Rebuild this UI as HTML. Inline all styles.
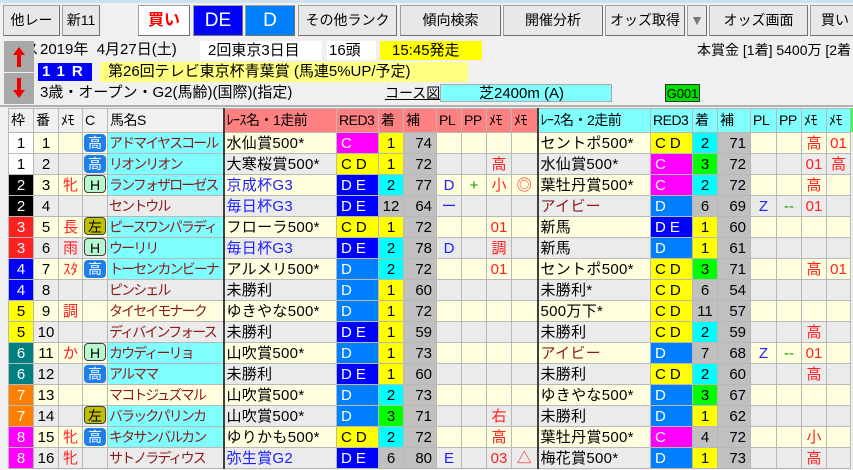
<!DOCTYPE html>
<html><head><meta charset="utf-8"><style>
*{margin:0;padding:0;box-sizing:border-box}
body{width:853px;height:470px;overflow:hidden;background:#f0f0f0;font-family:"Liberation Sans","Noto Sans CJK JP",sans-serif;position:relative;color:#000}
.a{position:absolute;white-space:nowrap}
.btn{position:absolute;top:5px;height:31px;background:#e8e8e8;border:1px solid #a0a0a0;border-right-color:#707070;border-bottom-color:#707070;font-size:14px;text-align:center;line-height:29px}
table{position:absolute;left:8px;top:108px;width:842px;border-collapse:collapse;table-layout:fixed;font-size:15px}
td,th{border:1px solid #b8b8b8;height:21px;padding:0;white-space:nowrap;overflow:hidden;line-height:19px;font-weight:normal}
th{height:24px;background:#f0f0f0;text-align:left;padding-left:2px;font-size:14px;letter-spacing:-0.5px}
th.s{background:#ff8080}th.c{background:#80ffff}
tr.o td{background:#ffffe0}tr.e td{background:#ebebeb}
td.n{text-align:center}
td.w{text-align:center;color:#fff}
td.nm{color:#8b1a1a;padding-left:1px;font-size:14px;letter-spacing:-1.9px}
tr td.cy{background:#80ffff}
td.r{border-left:2px solid #404040;padding-left:2px;letter-spacing:.3px}
th.r{border-left:2px solid #404040}
td.red{padding-left:4px;letter-spacing:4px}
tr td.C{background:#ff00ff;color:#fff}tr td.CD{background:#ffff00}tr td.DE{background:#0000ff;color:#fff}tr td.D{background:#0080ff;color:#fff}
tr td.y{background:#ffff00;text-align:center}tr td.q{background:#00ffff;text-align:center}tr td.g{background:#00ff00;text-align:center}tr td.gr{background:#c0c0c0;text-align:center}
tr td.h{background:#c0c0c0;text-align:right;padding-right:4px}
.m{color:#ff2020;text-align:center}.b{color:#2020ff}.gn{color:#00a000}
.bd{display:inline-block;width:22px;height:18px;border-radius:4px;text-align:center;line-height:18px;font-size:14px;margin-left:1px}
.k{background:#1e7fe8;color:#fff}.H{background:#b8f8d0;border:1px solid #404040}.L{background:#c0c000;border:1px solid #404040}
</style></head><body>
<div class="a" style="left:0;top:0;width:853px;height:3px;background:#cfe0f0"></div>
<div class="btn" style="left:3px;width:57px">他レース</div>
<div class="btn" style="left:62px;width:38px">新11</div>
<div class="btn" style="left:138px;width:52px;background:#fff;color:#f00;font-weight:bold;font-size:16px">買い</div>
<div class="btn" style="left:193px;width:50px;background:#0000ff;color:#fff;font-size:19px">DE</div>
<div class="btn" style="left:245px;width:50px;background:#0080ff;color:#fff;font-size:19px">D</div>
<div class="btn" style="left:298px;width:99px">その他ランク</div>
<div class="btn" style="left:400px;width:101px">傾向検索</div>
<div class="btn" style="left:503px;width:100px">開催分析</div>
<div class="btn" style="left:605px;width:80px">オッズ取得</div>
<div class="btn" style="left:687px;width:20px;color:#777">▼</div>
<div class="btn" style="left:709px;width:99px">オッズ画面</div>
<div class="btn" style="left:810px;width:50px">買い</div>
<svg class="a" style="left:4px;top:41px" width="30" height="63"><rect width="30" height="31" fill="#a8a8a8"/><rect y="32" width="30" height="31" fill="#a8a8a8"/><path d="M15 6 L21 14 L17 14 L17 26 L13 26 L13 14 L9 14 Z" fill="#e00"/><path d="M15 57 L21 49 L17 49 L17 37 L13 37 L13 49 L9 49 Z" fill="#e00"/></svg>
<div class="a" style="left:40px;top:40px;font-size:15px;line-height:20px">2019年&nbsp; 4月27日(土)</div>
<div class="a" style="left:200px;top:41px;width:122px;height:19px;background:#fff;font-size:15px;line-height:19px;padding-left:8px">2回東京3日目</div>
<div class="a" style="left:327px;top:41px;width:49px;height:19px;background:#fff;font-size:15px;line-height:19px;padding-left:2px">16頭</div>
<div class="a" style="left:380px;top:41px;width:102px;height:19px;background:#ffff00;font-size:15px;line-height:19px;padding-left:12px">15:45発走</div>
<div class="a" style="left:697px;top:40px;font-size:14px;line-height:20px">本賞金 [1着] 5400万 [2着</div>
<div class="a" style="left:38px;top:63px;width:54px;height:18px;background:#0000ff;color:#fff;font-size:15px;line-height:18px;font-weight:bold;letter-spacing:7px;padding-left:4px">11R</div>
<div class="a" style="left:100px;top:62px;width:368px;height:20px;background:#ffff80;font-size:15px;line-height:20px;padding-left:8px">第26回テレビ東京杯青葉賞 (馬連5%UP/予定)</div>
<div class="a" style="left:40px;top:83px;font-size:15px;line-height:20px">3歳・オープン・G2(馬齢)(国際)(指定)</div>
<div class="a" style="left:385px;top:83px;font-size:14px;line-height:20px;text-decoration:underline">コース図</div>
<div class="a" style="left:440px;top:84px;width:172px;height:18px;background:#80ffff;font-size:15px;line-height:18px;padding-left:38px;border:1px solid #aaa">芝2400m (A)</div>
<div class="a" style="left:665px;top:84px;width:35px;height:18px;background:#00e000;font-size:13px;line-height:18px;text-align:center;border:1px solid #333">G001</div>
<div class="a" style="left:0;top:105px;width:853px;height:2px;background:#b0b0b0"></div>
<div class="a" style="left:850px;top:108px;width:3px;height:24px;background:#40ff40"></div>
<table>
<colgroup><col style="width:25px"><col style="width:25px"><col style="width:24px"><col style="width:25px"><col style="width:116px"><col style="width:113px"><col style="width:42px"><col style="width:25px"><col style="width:33px"><col style="width:25px"><col style="width:25px"><col style="width:25px"><col style="width:26px"><col style="width:113px"><col style="width:42px"><col style="width:25px"><col style="width:33px"><col style="width:26px"><col style="width:25px"><col style="width:25px"><col style="width:24px"></colgroup>
<tr><th>枠</th><th>番</th><th>ﾒﾓ</th><th>C</th><th>馬名S</th><th class="s r">ﾚｰｽ名・1走前</th><th class="s">RED3</th><th class="s">着</th><th class="s">補</th><th class="s">PL</th><th class="s">PP</th><th class="s">ﾒﾓ</th><th class="s">ﾒﾓ</th><th class="c r">ﾚｰｽ名・2走前</th><th class="c">RED3</th><th class="c">着</th><th class="c">補</th><th class="c">PL</th><th class="c">PP</th><th class="c">ﾒﾓ</th><th class="c">ﾒﾓ</th></tr>
<tr class="o"><td class="w" style="background:#fff;color:#000">1</td><td class="n">1</td><td></td><td><span class="bd k">高</span></td><td class="nm cy">アドマイヤスコール</td><td class="r">水仙賞500*</td><td class="red C">C</td><td class="y">1</td><td class="h">74</td><td></td><td></td><td></td><td></td><td class="r">セントポ500*</td><td class="red CD">CD</td><td class="q">2</td><td class="h">71</td><td></td><td></td><td class="m">高</td><td class="m">01</td></tr>
<tr class="e"><td class="w" style="background:#fff;color:#000">1</td><td class="n">2</td><td></td><td><span class="bd k">高</span></td><td class="nm cy">リオンリオン</td><td class="r">大寒桜賞500*</td><td class="red CD">CD</td><td class="y">1</td><td class="h">72</td><td></td><td></td><td class="m">高</td><td></td><td class="r">水仙賞500*</td><td class="red C">C</td><td class="g">3</td><td class="h">72</td><td></td><td></td><td class="m">01</td><td class="m">高</td></tr>
<tr class="o"><td class="w" style="background:#000">2</td><td class="n">3</td><td class="m">牝</td><td><span class="bd H">H</span></td><td class="nm cy">ランフォザローゼス</td><td class="r b">京成杯G3</td><td class="red DE">DE</td><td class="q">2</td><td class="h">77</td><td class="n b">D</td><td class="n gn">+</td><td class="m">小</td><td class="m">◎</td><td class="r">葉牡丹賞500*</td><td class="red C">C</td><td class="q">2</td><td class="h">72</td><td></td><td></td><td class="m">高</td><td></td></tr>
<tr class="e"><td class="w" style="background:#000">2</td><td class="n">4</td><td></td><td></td><td class="nm">セントウル</td><td class="r b">毎日杯G3</td><td class="red DE">DE</td><td class="gr">12</td><td class="h">64</td><td class="n b">ー</td><td></td><td></td><td></td><td class="r" style="color:#8b1a1a">アイビー</td><td class="red D">D</td><td class="gr">6</td><td class="h">69</td><td class="n b">Z</td><td class="n gn">--</td><td class="m">01</td><td></td></tr>
<tr class="o"><td class="w" style="background:#ff2020">3</td><td class="n">5</td><td class="m">長</td><td><span class="bd L">左</span></td><td class="nm cy">ピースワンパラディ</td><td class="r">フローラ500*</td><td class="red CD">CD</td><td class="y">1</td><td class="h">72</td><td></td><td></td><td class="m">01</td><td></td><td class="r">新馬</td><td class="red DE">DE</td><td class="y">1</td><td class="h">60</td><td></td><td></td><td></td><td></td></tr>
<tr class="e"><td class="w" style="background:#ff2020">3</td><td class="n">6</td><td class="m">雨</td><td><span class="bd H">H</span></td><td class="nm cy">ウーリリ</td><td class="r b">毎日杯G3</td><td class="red DE">DE</td><td class="q">2</td><td class="h">78</td><td class="n b">D</td><td></td><td class="m">調</td><td></td><td class="r">新馬</td><td class="red D">D</td><td class="y">1</td><td class="h">61</td><td></td><td></td><td></td><td></td></tr>
<tr class="o"><td class="w" style="background:#0000ff">4</td><td class="n">7</td><td class="m">ｽﾀ</td><td><span class="bd k">高</span></td><td class="nm cy">トーセンカンビーナ</td><td class="r">アルメリ500*</td><td class="red D">D</td><td class="q">2</td><td class="h">72</td><td></td><td></td><td class="m">01</td><td></td><td class="r">セントポ500*</td><td class="red CD">CD</td><td class="g">3</td><td class="h">71</td><td></td><td></td><td class="m">高</td><td class="m">01</td></tr>
<tr class="e"><td class="w" style="background:#0000ff">4</td><td class="n">8</td><td></td><td></td><td class="nm">ピンシェル</td><td class="r">未勝利</td><td class="red D">D</td><td class="y">1</td><td class="h">60</td><td></td><td></td><td></td><td></td><td class="r">未勝利*</td><td class="red CD">CD</td><td class="gr">6</td><td class="h">54</td><td></td><td></td><td></td><td></td></tr>
<tr class="o"><td class="w" style="background:#ffff00;color:#000">5</td><td class="n">9</td><td class="m">調</td><td></td><td class="nm">タイセイモナーク</td><td class="r">ゆきやな500*</td><td class="red D">D</td><td class="y">1</td><td class="h">72</td><td></td><td></td><td></td><td></td><td class="r">500万下*</td><td class="red CD">CD</td><td class="gr">11</td><td class="h">57</td><td></td><td></td><td></td><td></td></tr>
<tr class="e"><td class="w" style="background:#ffff00;color:#000">5</td><td class="n">10</td><td></td><td></td><td class="nm">ディバインフォース</td><td class="r">未勝利</td><td class="red DE">DE</td><td class="y">1</td><td class="h">59</td><td></td><td></td><td></td><td></td><td class="r">未勝利</td><td class="red CD">CD</td><td class="q">2</td><td class="h">59</td><td></td><td></td><td class="m">高</td><td></td></tr>
<tr class="o"><td class="w" style="background:#008080">6</td><td class="n">11</td><td class="m">か</td><td><span class="bd H">H</span></td><td class="nm cy">カウディーリョ</td><td class="r">山吹賞500*</td><td class="red D">D</td><td class="y">1</td><td class="h">73</td><td></td><td></td><td></td><td></td><td class="r" style="color:#8b1a1a">アイビー</td><td class="red D">D</td><td class="gr">7</td><td class="h">68</td><td class="n b">Z</td><td class="n gn">--</td><td class="m">01</td><td></td></tr>
<tr class="e"><td class="w" style="background:#008080">6</td><td class="n">12</td><td></td><td><span class="bd k">高</span></td><td class="nm cy">アルママ</td><td class="r">未勝利</td><td class="red DE">DE</td><td class="y">1</td><td class="h">60</td><td></td><td></td><td></td><td></td><td class="r">未勝利</td><td class="red CD">CD</td><td class="q">2</td><td class="h">60</td><td></td><td></td><td class="m">高</td><td></td></tr>
<tr class="o"><td class="w" style="background:#ff8000">7</td><td class="n">13</td><td></td><td></td><td class="nm">マコトジュズマル</td><td class="r">山吹賞500*</td><td class="red D">D</td><td class="q">2</td><td class="h">73</td><td></td><td></td><td></td><td></td><td class="r">ゆきやな500*</td><td class="red D">D</td><td class="g">3</td><td class="h">67</td><td></td><td></td><td></td><td></td></tr>
<tr class="e"><td class="w" style="background:#ff8000">7</td><td class="n">14</td><td></td><td><span class="bd L">左</span></td><td class="nm cy">バラックパリンカ</td><td class="r">山吹賞500*</td><td class="red D">D</td><td class="g">3</td><td class="h">71</td><td></td><td></td><td class="m">右</td><td></td><td class="r">未勝利</td><td class="red D">D</td><td class="y">1</td><td class="h">62</td><td></td><td></td><td></td><td></td></tr>
<tr class="o"><td class="w" style="background:#ff00ff">8</td><td class="n">15</td><td class="m">牝</td><td><span class="bd k">高</span></td><td class="nm cy">キタサンバルカン</td><td class="r">ゆりかも500*</td><td class="red CD">CD</td><td class="q">2</td><td class="h">72</td><td></td><td></td><td class="m">高</td><td></td><td class="r">葉牡丹賞500*</td><td class="red C">C</td><td class="gr">4</td><td class="h">72</td><td></td><td></td><td class="m">小</td><td></td></tr>
<tr class="e"><td class="w" style="background:#ff00ff">8</td><td class="n">16</td><td class="m">牝</td><td></td><td class="nm">サトノラディウス</td><td class="r b">弥生賞G2</td><td class="red DE">DE</td><td class="gr">6</td><td class="h">80</td><td class="n b">E</td><td></td><td class="m">03</td><td class="m">△</td><td class="r">梅花賞500*</td><td class="red D">D</td><td class="y">1</td><td class="h">73</td><td></td><td></td><td class="m">高</td><td></td></tr>
</table>
</body></html>
